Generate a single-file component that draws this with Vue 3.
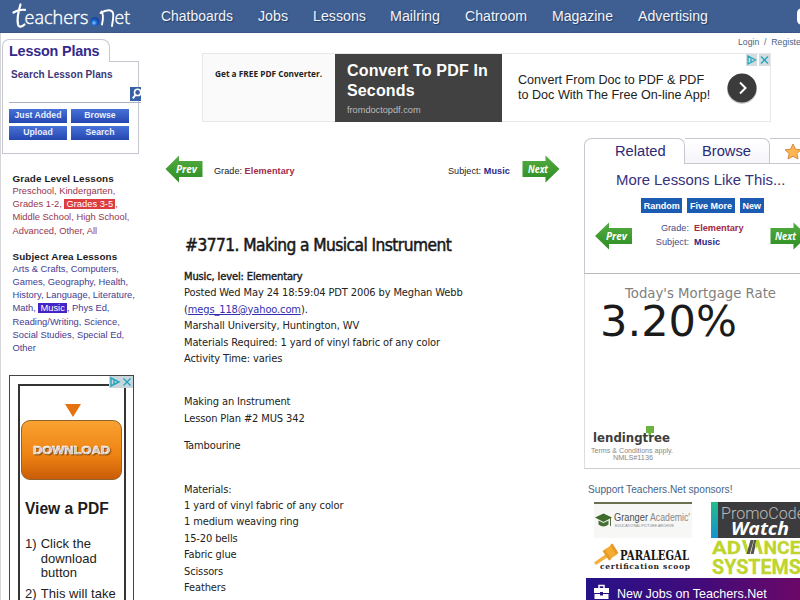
<script setup>
const nav = [
  { t: 'Chatboards', w: 72 }, { t: 'Jobs', w: 30 }, { t: 'Lessons', w: 53 }, { t: 'Mailring', w: 50 },
  { t: 'Chatroom', w: 62 }, { t: 'Magazine', w: 61 }, { t: 'Advertising', w: 70 }
]
const buttons = ['Just Added', 'Browse', 'Upload', 'Search']
const intro = ['Marshall University, Huntington, WV', 'Materials Required: 1 yard of vinyl fabric of any color', 'Activity Time: varies']
const materials = ['Materials:', '1 yard of vinyl fabric of any color', '1 medium weaving ring', '15-20 bells', 'Fabric glue', 'Scissors', 'Feathers', 'Beads']
</script>

<template>
  <div class="page">
    <header class="top">
      <svg class="logo" width="126" height="33" viewBox="0 0 126 33">
        <defs>
          <radialGradient id="ball" cx="40%" cy="65%"><stop offset="0" stop-color="#8fd0ff" /><stop offset=".5" stop-color="#1f6fd8" /><stop offset="1" stop-color="#1747a6" /></radialGradient>
        </defs>
        <path d="M8.500 4.500C6.500 11 5 20 6 24.500C6.800 27.500 10 27 12.500 24.500M1.500 12.500C5 10 9 9.500 13 9.800" fill="none" stroke="#fff" stroke-width="2.200" stroke-linecap="round" />
        <text x="12.500" y="24" textLength="64" lengthAdjust="spacingAndGlyphs" class="lt">eachers</text>
        <circle cx="83" cy="21.500" r="4.600" fill="url(#ball)" />
        <path d="M89.500 11.500C91.500 14 91 20 90 24.500M88.500 13C94 9.500 100 9 101 13C102 17 100.500 21 100 26" fill="none" stroke="#fff" stroke-width="1.900" stroke-linecap="round" />
        <text x="102.500" y="24" textLength="15.500" lengthAdjust="spacingAndGlyphs" class="lt">et</text>
      </svg>
      <nav class="menu">
        <svg v-for="n in nav" :key="n.t" :width="n.w" height="33"><text x="0" y="21" :textLength="n.w" lengthAdjust="spacingAndGlyphs">{{ n.t }}</text></svg>
      </nav>
      <div class="find"></div>
    </header>

    <div class="cols">
      <aside class="left">
        <section class="card">
          <h2 class="tab">Lesson Plans</h2>
          <div class="panel">
            <h3>Search Lesson Plans</h3>
            <div class="field">
              <svg width="11" height="14" viewBox="0 0 11 14"><rect width="11" height="14" fill="#3661a6" /><circle cx="7.600" cy="5.400" r="3.100" fill="none" stroke="#fff" stroke-width="1.600" /><path d="M5.400 8L2.800 11.300" stroke="#fff" stroke-width="2" /></svg>
            </div>
            <div class="btns"><span v-for="b in buttons" :key="b">{{ b }}</span></div>
          </div>
        </section>
        <section class="links red">
          <h4>Grade Level Lessons</h4>
          <p>Preschool, Kindergarten,<br />Grades 1-2, <b>Grades 3-5</b>,<br />Middle School, High School,<br />Advanced, Other, All</p>
        </section>
        <section class="links blue">
          <h4>Subject Area Lessons</h4>
          <p>Arts &amp; Crafts, Computers,<br />Games, Geography, Health,<br />History, Language, Literature,<br />Math, <b>Music</b>, Phys Ed,<br />Reading/Writing, Science,<br />Social Studies, Special Ed,<br />Other</p>
        </section>
        <section class="ad">
          <svg class="choice" width="24" height="12" viewBox="0 0 24 12"><rect width="24" height="12" fill="#c9d6dc" /><path d="M2 2L10 6L2 10ZM5 4.500V8M14.500 2.500L21.500 9.500M21.500 2.500L14.500 9.500" fill="none" stroke="#22a5bf" stroke-width="1.400" /></svg>
          <div class="frame">
            <svg class="tri" width="16" height="13"><path d="M0 0H16L8 13Z" fill="#e5710f" /></svg>
            <div class="dl"><svg width="78" height="16"><text x="0" y="12" textLength="77" lengthAdjust="spacingAndGlyphs" class="dlt">DOWNLOAD</text></svg></div>
            <h3>View a PDF</h3>
            <div class="step"><span>1)</span><span>Click the<br />download<br />button</span></div>
            <div class="step"><span>2)</span><span>This will take</span></div>
          </div>
        </section>
      </aside>

      <div class="rest">
        <div class="login">Login &nbsp;/&nbsp; Register</div>
        <section class="banner">
          <div class="b1"><svg width="110" height="14"><text x="0" y="10" textLength="107" lengthAdjust="spacingAndGlyphs">Get a FREE PDF Converter.</text></svg></div>
          <div class="b2"><strong>Convert To PDF In<br />Seconds</strong><small>fromdoctopdf.com</small></div>
          <div class="b3">
            <p>Convert From Doc to PDF &amp; PDF<br />to Doc With The Free On-line App!</p>
            <svg class="go" width="34" height="34" viewBox="0 0 34 34"><circle cx="17" cy="18" r="15" fill="#ccc" /><circle cx="17" cy="17" r="14.500" fill="#3b3b3b" /><path d="M15 11.500L20.500 17L15 22.500" fill="none" stroke="#fff" stroke-width="2" /></svg>
            <svg class="choice" width="24" height="12" viewBox="0 0 24 12"><path d="M0 0H11V12H0ZM13 0H24V12H13Z" fill="#d3dcdf" /><path d="M2 2L9.500 6L2 10ZM5 4.500V8M15 2.500L22 9.500M22 2.500L15 9.500" fill="none" stroke="#22a5bf" stroke-width="1.300" /></svg>
          </div>
        </section>

        <div class="main">
          <main class="lesson">
            <div class="pager">
              <svg width="38" height="28" viewBox="0 0 38 28"><defs><linearGradient id="g" x2="0" y2="1"><stop offset="0" stop-color="#55ad42" /><stop offset="1" stop-color="#2c8c22" /></linearGradient></defs><path d="M.5 14L14 .5V6H37.500V22H14V27.500Z" fill="url(#g)" /><text x="11" y="17.500" textLength="21" lengthAdjust="spacingAndGlyphs" class="arrow">Prev</text></svg>
              <span class="gr">Grade: <b>Elementary</b></span>
              <span class="su">Subject: <b>Music</b></span>
              <svg width="38" height="28" viewBox="0 0 38 28"><path d="M37.500 14L23.500 .5V6H.5V22H23.500V27.500Z" fill="url(#g)" /><text x="6" y="17.500" textLength="20" lengthAdjust="spacingAndGlyphs" class="arrow">Next</text></svg>
            </div>
            <h1>#3771. Making a Musical Instrument</h1>
            <div class="text">
              <p class="lvl">Music, level: Elementary</p>
              <p>Posted Wed May 24 18:59:04 PDT 2006 by Meghan Webb</p>
              <p>(<a>megs_118@yahoo.com</a>).</p>
              <p v-for="l in intro" :key="l">{{ l }}</p>
              <p class="g1">Making an Instrument</p>
              <p>Lesson Plan #2 MUS 342</p>
              <p class="g2">Tambourine</p>
              <div class="g1"><p v-for="l in materials" :key="l">{{ l }}</p></div>
            </div>
          </main>

          <aside class="right">
            <section class="related">
              <div class="tabs"><span class="on">Related</span><span class="off">Browse</span><span class="star"><svg width="18" height="17" viewBox="0 0 18 17"><path d="M9 1L11.500 6.200L17 6.800L12.800 10.500L14 16L9 13.200L4 16L5.200 10.500L1 6.800L6.500 6.200Z" fill="#fdb64e" stroke="#d68b45" /></svg></span></div>
              <h2>More Lessons Like This...</h2>
              <div class="pills"><span>Random</span><span>Five More</span><span>New</span></div>
              <div class="rel">
                <svg width="38" height="28" viewBox="0 0 38 28"><path d="M0 14L14 .5V6H37V22H14V27.500Z" fill="url(#g)" /><text x="11" y="17.500" textLength="21" lengthAdjust="spacingAndGlyphs" class="arrow">Prev</text></svg>
                <div class="facts"><span>Grade:</span><b class="r">Elementary</b><span>Subject:</span><b>Music</b></div>
                <svg width="38" height="28" viewBox="0 0 38 28"><path d="M37.500 14L23.500 .5V6H.5V22H23.500V27.500Z" fill="url(#g)" /><text x="5" y="17.500" textLength="21" lengthAdjust="spacingAndGlyphs" class="arrow">Next</text></svg>
              </div>
            </section>
            <section class="rate">
              <svg width="216" height="194" viewBox="0 0 216 194">
                <text x="40" y="24" textLength="151" lengthAdjust="spacingAndGlyphs" class="m1">Today's Mortgage Rate</text>
                <text x="15" y="62" textLength="137" lengthAdjust="spacingAndGlyphs" class="m2">3.20%</text>
                <path d="M61 152H69V159H66V162H63.500V159H61Z" fill="#6cb33f" />
                <text x="8" y="168" textLength="77" lengthAdjust="spacingAndGlyphs" class="m3">lendingtree</text>
                <text x="6" y="179" textLength="82" lengthAdjust="spacingAndGlyphs" class="m4">Terms &amp; Conditions apply.</text>
                <text x="28" y="185.500" textLength="40" lengthAdjust="spacingAndGlyphs" class="m4">NMLS#1136</text>
              </svg>
            </section>
            <p class="support">Support Teachers.Net sponsors!</p>
            <div class="sponsors">
              <svg width="98" height="36" viewBox="0 0 98 36">
                <rect width="98" height="36" fill="#f7f7f6" /><rect width="98" height="2" fill="#6d7050" />
                <path d="M1 15.500L9.500 11.500L18 15.500L9.500 20Z" fill="#3e6b2b" /><path d="M4.500 18.500V22.500Q9.500 26.500 14.500 22.500V18.500L9.500 21Z" fill="#456f35" /><path d="M16.500 16V24" stroke="#56704a" />
                <text x="20" y="19" textLength="34" lengthAdjust="spacingAndGlyphs" class="s1">Granger</text>
                <text x="56" y="19" textLength="40" lengthAdjust="spacingAndGlyphs" class="s1 lite">Academic'</text>
                <text x="21" y="25" textLength="59" lengthAdjust="spacingAndGlyphs" class="s2">EDUCATIONAL PICTURE ARCHIVE</text>
              </svg>
              <svg width="89" height="36" viewBox="0 0 89 36">
                <defs><linearGradient id="pc" x2="0" y2="1"><stop offset="0" stop-color="#22bd8b" /><stop offset="1" stop-color="#1591d0" /></linearGradient></defs>
                <rect width="89" height="36" fill="#3c3c3e" /><rect width="7" height="36" fill="url(#pc)" />
                <text x="10" y="16.500" textLength="84" lengthAdjust="spacingAndGlyphs" class="s3">PromoCode</text>
                <text x="20" y="33" textLength="58" lengthAdjust="spacingAndGlyphs" class="s4">Watch</text>
              </svg>
              <svg width="98" height="38" viewBox="0 0 98 38">
                <path d="M0 22.500L12 14L14 17L2 25Z" fill="#f5b13b" /><path d="M10 10L17.500 5L23 14.500L16 19Z" fill="#f5ac30" /><path d="M8.500 11L11 9.500L17.500 19L15 20.500ZM16 5L18.500 3.500L24.500 13L22 14.500Z" fill="#e59c28" />
                <text x="26" y="19.500" textLength="69" lengthAdjust="spacingAndGlyphs" class="s5">PARALEGAL</text>
                <text x="6" y="28.500" textLength="90" lengthAdjust="spacing" class="s6">certification scoop</text>
              </svg>
              <svg width="89" height="38" viewBox="0 0 89 38">
                <text x="1" y="14" textLength="29" lengthAdjust="spacingAndGlyphs" class="s7">AD</text>
                <g transform="translate(3.500 0) scale(.88 1)"><path d="M31 0H35L38 9L40.500 1H44.500L40 14H36Z" fill="#bfd52d" /><path d="M36.500 14L41 0H44.500L40 14ZM41 14L45 0H48L44.500 14Z" fill="#555" /><path d="M46 5L47.500 0H50.500L55 14H51L48.500 6L47.500 9Z" fill="#bfd52d" /></g>
                <text x="52.500" y="14" textLength="37" lengthAdjust="spacingAndGlyphs" class="s7">NCE</text>
                <text x="1" y="34" textLength="89" lengthAdjust="spacingAndGlyphs" class="s7 big">SYSTEMS</text>
              </svg>
            </div>
            <div class="jobs">
              <svg width="15" height="16" viewBox="0 0 15 16"><path d="M5 4V1.500H10V4" fill="none" stroke="#fff" stroke-width="1.500" /><path d="M0 4H15V9H9V8H6V9H0ZM.5 10H6V11.500H9V10H14.500V15H.5Z" fill="#fff" /></svg>
              <span>New Jobs on Teachers.Net</span>
            </div>
          </aside>
        </div>
      </div>
    </div>
  </div>
</template>

<style>
body { background: #fff; overflow: hidden; }
</style>
<style scoped>
* { box-sizing: border-box; margin: 0; padding: 0; }
svg { display: block; flex: none; overflow: visible; }
.page { width: 800px; height: 600px; overflow: hidden; font-family: "Liberation Sans", Arial, sans-serif; color: #222; background: #fff; }
.top { height: 33px; background: #3f5f93; border-bottom: 1px solid #385784; display: flex; padding-left: 12px; overflow: hidden; }
.lt { font: 19px "Open Sans", sans-serif; font-weight: 300; fill: #fff; stroke: #fff; stroke-width: .4; }
.menu { display: flex; gap: 24.800px; margin-left: 23px; }
.menu text { font-size: 14px; fill: #f1f4fa; text-shadow: 1px 1px 1px #263d63; }
.find { margin: 8px 0 0 89px; width: 20px; height: 17px; background: #fff; border-radius: 5px; flex: none; }
.cols { display: flex; height: 567px; }
.left { width: 156px; flex: none; border-left: 1px solid #d5d6d9; padding: 6px 0 0 1px; }
.card { width: 137px; }
.tab { position: relative; width: 108px; height: 23px; border: 1px solid #c7c8cf; border-bottom: 0; border-radius: 7px 8px 0 0; background: #fff; font-size: 14.400px; line-height: 22px; padding-left: 6px; color: #33298a; white-space: nowrap; letter-spacing: -.2px; }
.panel { margin-top: -1px; height: 93px; border: 1px solid #c7c8cf; padding: 6px 0 0 6px; }
.panel h3 { font-size: 10px; line-height: 13px; padding-left: 2px; color: #3d3779; white-space: nowrap; letter-spacing: .05px; }
.field { width: 132px; height: 16px; margin-top: 6px; border-bottom: 1px solid #a9b1c4; display: flex; justify-content: flex-end; }
.btns { display: grid; grid-template-columns: 58px 58px; gap: 3px 4px; margin: 6px 0 0; }
.btns span { height: 14px; background: linear-gradient(#4772d8, #2547b0); color: #e8efff; font-size: 8.700px; font-weight: bold; line-height: 13px; text-align: center; }
.links { padding-left: 10.500px; white-space: nowrap; }
.links h4 { font-size: 9.900px; line-height: 13px; color: #1c1c1c; letter-spacing: .1px; }
.links p { font-size: 9.350px; line-height: 13.200px; }
.links b { font-weight: normal; color: #fff; padding: 0 2px; }
.red { margin-top: 18px; color: #97364f; }
.red b { background: #dc3d40; }
.blue { margin-top: 12px; color: #443c91; }
.blue b { background: #4524c5; }
.ad { position: relative; width: 125px; height: 260px; margin: 20px 0 0 7px; border: 1px solid #444; padding: 8px 7px 0 8px; }
.frame { height: 260px; border: 2px solid #333; display: flex; flex-direction: column; padding-left: 6px; }
.choice { position: absolute; top: 0; right: 0; }
.tri { margin: 18px 0 0 39px; }
.dl { width: 101px; height: 60px; flex: none; margin: 3px 0 0 -5px; border: 1px solid #94622a; border-radius: 9px; background: linear-gradient(#f9a232, #ee8212 60%, #c95c08); display: flex; align-items: center; justify-content: center; }
.dlt { font-size: 11.500px; font-weight: bold; fill: #fff; stroke: #fff; stroke-width: .5; text-shadow: 1px 1px 1px #70410f; }
.frame h3 { font-size: 15.600px; line-height: 20px; margin: 19px 0 18px -1px; white-space: nowrap; color: #1d1d1d; }
.step { display: flex; gap: 4px; font-size: 13px; line-height: 14.400px; margin: 0 -9px 7px -1px; white-space: nowrap; letter-spacing: .05px; }
.rest { flex: 1; min-width: 0; }
.login { height: 20px; padding: 4px 0 0 582px; font-size: 8.700px; line-height: 11px; color: #4c5f80; white-space: nowrap; }
.banner { width: 569px; height: 69px; margin-left: 46px; border: 1px solid #e7e7e7; display: flex; }
.b1 { width: 132px; background: #fafafa; padding: 13px 0 0 12px; }
.b1 text { font: bold 9px "Open Sans", sans-serif; fill: #222; }
.b2 { width: 167px; margin-bottom: -1px; background: #414141; color: #fff; padding: 7px 0 0 12px; white-space: nowrap; }
.b2 strong { display: block; font-size: 16px; line-height: 19.500px; letter-spacing: .15px; }
.b2 small { display: block; font-size: 9.200px; line-height: 10px; margin-top: 5px; color: #bbb; }
.b3 { position: relative; flex: 1; display: flex; padding: 19px 0 0 16px; }
.b3 p { width: 207px; font-size: 12.600px; line-height: 15px; white-space: nowrap; }
.go { margin-top: -2px; }
.main { display: flex; }
.lesson { width: 428px; padding: 33px 0 0 9px; }
.pager { display: flex; width: 395px; font-size: 9.100px; line-height: 32px; white-space: nowrap; letter-spacing: .04px; }
.pager b { font-weight: bold; letter-spacing: .1px; }
.gr { margin-left: 11px; } .gr b { color: #a02a4a; }
.su { margin-left: auto; margin-right: 12px; } .su b { color: #2c2886; }
.arrow { font: italic bold 10px "Open Sans", sans-serif; fill: #fff; letter-spacing: 0; }
h1 { margin: 47px 0 0 20px; font: 17.200px/22px "DejaVu Sans Condensed", "DejaVu Sans", sans-serif; font-stretch: condensed; -webkit-text-stroke: .5px #181818; color: #181818; letter-spacing: -.55px; white-space: nowrap; }
.text { margin: 13px 0 0 19px; font: 11px/16.400px "DejaVu Sans Condensed", "DejaVu Sans", sans-serif; font-stretch: condensed; letter-spacing: -.12px; white-space: nowrap; color: #222; }
.lvl { -webkit-text-stroke: .4px #181818; }
.text a { color: #3431b0; text-decoration: underline; }
.g1 { margin-top: 27px; } .g2 { margin-top: 11px; }
.right { width: 216px; padding-top: 16px; flex: none; }
.related { height: 136px; border-left: 1px solid #c6c7cf; border-bottom: 1px solid #bbb; border-radius: 7px 0 0 0; }
.tabs { display: flex; height: 26px; font-size: 14.700px; color: #2d2876; line-height: 25px; }
.on { width: 100px; border-top: 1px solid #c6c7cf; border-radius: 7px 7px 0 0; border-right: 1px solid #c6c7cf; padding-left: 30px; }
.off { width: 85px; border: 1px solid #c6c7cf; border-left: 0; border-radius: 0 7px 0 0; padding-left: 17px; background: linear-gradient(#fff, #f5f5fa); }
.star { flex: 1; border: 1px solid #c6c7cf; border-width: 1px 0; padding: 4px 0 0 14px; overflow: hidden; }
.related h2 { font-size: 14.900px; line-height: 20px; font-weight: normal; color: #37317e; margin: 6px 0 0 31px; white-space: nowrap; }
.pills { display: flex; gap: 5px; margin: 8px 0 0 56px; }
.pills span { height: 15px; background: #1c5bb2; color: #fff; font-size: 9px; font-weight: bold; line-height: 16px; padding: 0 2.700px; white-space: nowrap; }
.rel { display: flex; margin: 9px 0 0 10px; }
.facts { display: grid; grid-template-columns: 45px 76px; column-gap: 5px; width: 139px; padding-left: 11px; font-size: 9.200px; line-height: 14px; height: 28px; margin-top: -1px; color: #4d4884; }
.facts span { text-align: right; } .facts b { color: #2c2886; } .facts .r { color: #a12842; }
.rate { height: 195px; border-left: 1px solid #ddd; border-bottom: 1px solid #ccc; }
.m1 { font: 13.800px "DejaVu Sans", sans-serif; fill: #808080; }
.m2 { font: 43.500px "DejaVu Sans", sans-serif; fill: #1b1b1b; }
.m3 { font: bold 13px "DejaVu Sans", sans-serif; fill: #3d3d3d; }
.m4 { font-size: 7px; fill: #888; }
.support { margin: 14px 0 0 4px; font-size: 10.150px; line-height: 14px; color: #496387; white-space: nowrap; }
.sponsors { display: grid; grid-template-columns: 98px 89px; gap: 2px 19px; margin: 5px 0 0 10px; }
.s1 { font-size: 10px; fill: #4c4c4c; } .lite { fill: #888; } .s2 { font-size: 3px; fill: #888; }
.s3 { font: 300 17px Roboto, sans-serif; fill: #bbb; } .s4 { font: italic bold 17px "Open Sans", sans-serif; fill: #fff; }
.s5 { font: bold 12.500px "DejaVu Serif", serif; fill: #151515; } .s6 { font: bold 7.500px "DejaVu Serif", serif; fill: #252525; }
.s7 { font: bold 19px Roboto, sans-serif; fill: #bfd52d; stroke: #bfd52d; stroke-width: .3; } .big { font-size: 21px; }
.jobs { height: 30px; margin-left: 2px; background: linear-gradient(90deg, #26128a, #430b79 55%, #6b0868); color: #fff; display: flex; padding: 6px 0 0 8px; font-size: 12.550px; line-height: 20px; gap: 8px; white-space: nowrap; }
</style>
